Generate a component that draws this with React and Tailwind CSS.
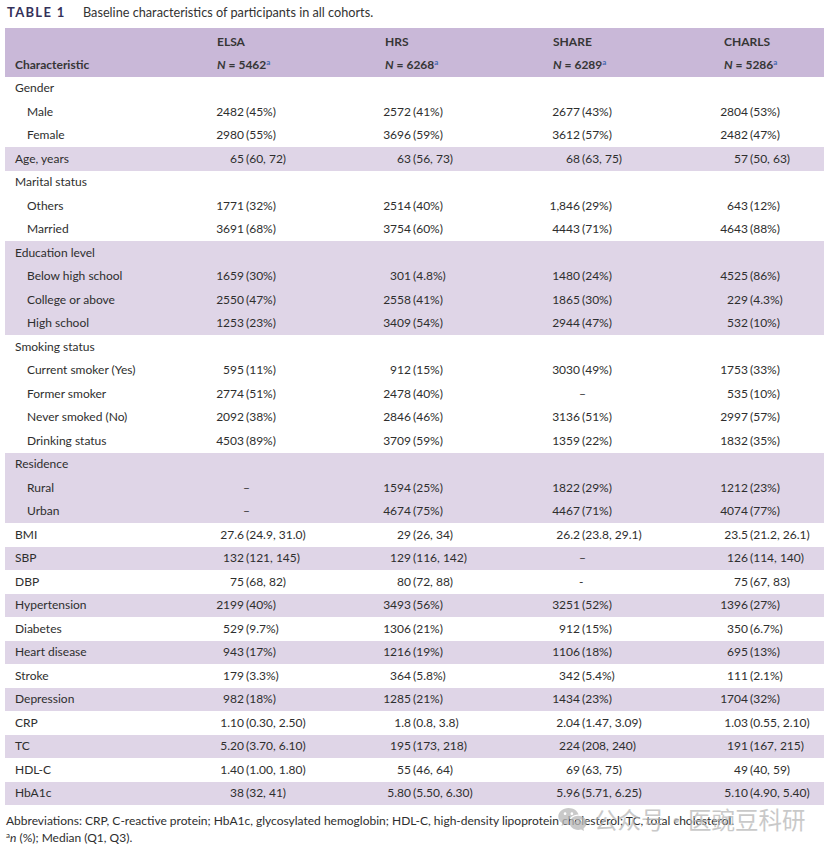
import { RiWechatFill } from "react-icons/ri";

const COLS = [
  { name: "ELSA", n: "5462", pad: "pl-[1px]" },
  { name: "HRS", n: "6268", pad: "pl-[2px]" },
  { name: "SHARE", n: "6289", pad: "pl-[1px]" },
  { name: "CHARLS", n: "5286", pad: "pl-[4px]" },
];

// label, indented, shaded, values
const rows = [
  ["Gender", false, false],
  ["Male", true, false, ["2482 (45%)", "2572 (41%)", "2677 (43%)", "2804 (53%)"]],
  ["Female", true, false, ["2980 (55%)", "3696 (59%)", "3612 (57%)", "2482 (47%)"]],
  ["Age, years", false, true, ["65 (60, 72)", "63 (56, 73)", "68 (63, 75)", "57 (50, 63)"]],
  ["Marital status", false, false],
  ["Others", true, false, ["1771 (32%)", "2514 (40%)", "1,846 (29%)", "643 (12%)"]],
  ["Married", true, false, ["3691 (68%)", "3754 (60%)", "4443 (71%)", "4643 (88%)"]],
  ["Education level", false, true],
  ["Below high school", true, true, ["1659 (30%)", "301 (4.8%)", "1480 (24%)", "4525 (86%)"]],
  ["College or above", true, true, ["2550 (47%)", "2558 (41%)", "1865 (30%)", "229 (4.3%)"]],
  ["High school", true, true, ["1253 (23%)", "3409 (54%)", "2944 (47%)", "532 (10%)"]],
  ["Smoking status", false, false],
  ["Current smoker (Yes)", true, false, ["595 (11%)", "912 (15%)", "3030 (49%)", "1753 (33%)"]],
  ["Former smoker", true, false, ["2774 (51%)", "2478 (40%)", "–", "535 (10%)"]],
  ["Never smoked (No)", true, false, ["2092 (38%)", "2846 (46%)", "3136 (51%)", "2997 (57%)"]],
  ["Drinking status", true, false, ["4503 (89%)", "3709 (59%)", "1359 (22%)", "1832 (35%)"]],
  ["Residence", false, true],
  ["Rural", true, true, ["–", "1594 (25%)", "1822 (29%)", "1212 (23%)"]],
  ["Urban", true, true, ["–", "4674 (75%)", "4467 (71%)", "4074 (77%)"]],
  ["BMI", false, false, ["27.6 (24.9, 31.0)", "29 (26, 34)", "26.2 (23.8, 29.1)", "23.5 (21.2, 26.1)"]],
  ["SBP", false, true, ["132 (121, 145)", "129 (116, 142)", "–", "126 (114, 140)"]],
  ["DBP", false, false, ["75 (68, 82)", "80 (72, 88)", "-", "75 (67, 83)"]],
  ["Hypertension", false, true, ["2199 (40%)", "3493 (56%)", "3251 (52%)", "1396 (27%)"]],
  ["Diabetes", false, false, ["529 (9.7%)", "1306 (21%)", "912 (15%)", "350 (6.7%)"]],
  ["Heart disease", false, true, ["943 (17%)", "1216 (19%)", "1106 (18%)", "695 (13%)"]],
  ["Stroke", false, false, ["179 (3.3%)", "364 (5.8%)", "342 (5.4%)", "111 (2.1%)"]],
  ["Depression", false, true, ["982 (18%)", "1285 (21%)", "1434 (23%)", "1704 (32%)"]],
  ["CRP", false, false, ["1.10 (0.30, 2.50)", "1.8 (0.8, 3.8)", "2.04 (1.47, 3.09)", "1.03 (0.55, 2.10)"]],
  ["TC", false, true, ["5.20 (3.70, 6.10)", "195 (173, 218)", "224 (208, 240)", "191 (167, 215)"]],
  ["HDL-C", false, false, ["1.40 (1.00, 1.80)", "55 (46, 64)", "69 (63, 75)", "49 (40, 59)"]],
  ["HbA1c", false, true, ["38 (32, 41)", "5.80 (5.50, 6.30)", "5.96 (5.71, 6.25)", "5.10 (4.90, 5.40)"]],
];

function Value({ text }) {
  const i = text.indexOf(" (");
  if (i < 0) {
    return (
      <div className="flex">
        <span className="w-[27px] shrink-0" />
        <span>{text}</span>
      </div>
    );
  }
  return (
    <div className="flex whitespace-nowrap">
      <span className="flex w-[28px] shrink-0 justify-end">{text.slice(0, i)}</span>
      <span className="ml-[2px]">{text.slice(i + 1)}</span>
    </div>
  );
}

const grid = "grid grid-cols-[211px_167px_169px_168px_1fr]";

export default function App() {
  return (
    <div className="relative h-[846px] w-[830px] bg-white font-['Lato',sans-serif] text-[12px] text-[#2e2e2e]">
      <div className="flex h-[28px] items-start pl-[7px] pt-[3px] leading-[18px]">
        <span className="w-[76px] text-[13px] font-bold tracking-[1.3px] text-[#34315a]">TABLE 1</span>
        <span className="text-[12.7px] text-[#333]">Baseline characteristics of participants in all cohorts.</span>
      </div>

      <div className="mx-[5px] w-[819px]">
        <div className={`${grid} h-[48.5px] bg-[#c9b8d8] pt-[6px] font-bold leading-[16px] text-[#363636]`}>
          <div className="flex flex-col gap-[7px] pl-[10px]">
            <span>&nbsp;</span>
            <span>Characteristic</span>
          </div>
          {COLS.map((c) => (
            <div key={c.name} className={`flex flex-col gap-[7px] ${c.pad}`}>
              <span>{c.name}</span>
              <span className="whitespace-nowrap">
                <i>N</i> = {c.n}
                <sup className="text-[8px] text-[#4468b0]">a</sup>
              </span>
            </div>
          ))}
        </div>

        {rows.map(([label, sub, shade, vals]) => (
          <div
            key={label}
            className={`${grid} h-[23.5px] items-center ${shade ? "bg-[#dfd5e7]" : "bg-white"}`}
          >
            <div className={sub ? "pl-[22px]" : "pl-[10px]"}>{label}</div>
            {(vals || ["", "", "", ""]).map((v, j) => (
              <div key={j}>{v && <Value text={v} />}</div>
            ))}
          </div>
        ))}
      </div>

      <div className="pl-[6px] pt-[6.5px] text-[12px] leading-[17px] text-[#2e2e2e]">
        <p>
          Abbreviations: CRP, C-reactive protein; HbA1c, glycosylated hemoglobin; HDL-C, high-density lipoprotein
          cholesterol; TC, total cholesterol.
        </p>
        <p>
          <sup className="text-[8px]">a</sup>
          <i>n</i> (%); Median (Q1, Q3).
        </p>
      </div>

      {/* watermark */}
      <div className="pointer-events-none absolute left-[557px] top-[804px] flex h-[30px] items-center gap-[6px] text-[#b8b8b8] opacity-75">
        <RiWechatFill className="h-[31px] w-[31px]" />
        <span className="font-['Noto_Sans_CJK_SC',sans-serif] text-[23.5px] leading-[30px]">公众号·医豌豆科研</span>
      </div>
    </div>
  );
}
